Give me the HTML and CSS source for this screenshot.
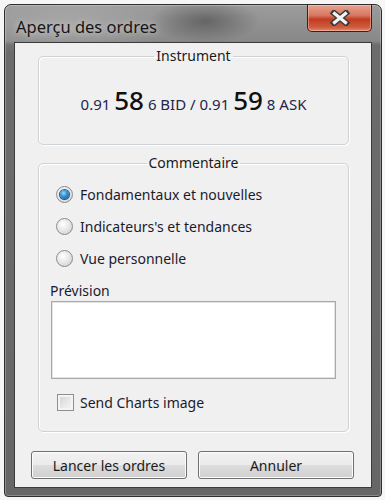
FILE: index.html
```html
<!DOCTYPE html>
<html lang="fr">
<head>
    <meta charset="UTF-8" />
    <title>Aperçu des ordres</title>
    <link rel="stylesheet" href="styles.css">
</head>
<body>
    <div class="window">
        <div class="titlebar">
            <span class="title">Aperçu des ordres</span>
            <button class="close-btn" aria-label="Fermer">
                <svg width="22" height="16" viewBox="0 0 22 16">
                    <path d="M5 3 L17 13 M17 3 L5 13" stroke="#3a3a3a" stroke-width="6" stroke-linecap="square"/>
                    <path d="M5.5 3.5 L16.5 12.5 M16.5 3.5 L5.5 12.5" stroke="#f4f4f4" stroke-width="3.2" stroke-linecap="square"/>
                </svg>
            </button>
        </div>

        <div class="client">
            <fieldset class="group group-instrument">
                <legend>Instrument</legend>
                <div class="prices">
                    <span>0.91</span> <b>58</b> <span>6 BID / 0.91</span> <b>59</b> <span>8 ASK</span>
                </div>
            </fieldset>

            <fieldset class="group group-comment">
                <legend>Commentaire</legend>

                <label class="radio-row">
                    <span class="radio checked"></span>
                    Fondamentaux et nouvelles
                </label>
                <label class="radio-row">
                    <span class="radio"></span>
                    Indicateurs's et tendances
                </label>
                <label class="radio-row">
                    <span class="radio"></span>
                    Vue personnelle
                </label>

                <div class="field-label">Prévision</div>
                <div class="textbox"></div>

                <label class="check-row">
                    <span class="checkbox"></span>
                    Send Charts image
                </label>
            </fieldset>

            <div class="actions">
                <button class="win-btn">Lancer les ordres</button>
                <button class="win-btn">Annuler</button>
            </div>
        </div>
    </div>
</body>
</html>
```

FILE: styles.css
```css
:root {
    --client-bg: #f0f0f0;
    --group-border: #cdd3d6;
    --text: #1b1b2e;
}

* {
    box-sizing: border-box;
}

body {
    margin: 0;
    width: 385px;
    height: 500px;
    overflow: hidden;
    font-family: "Noto Sans", "Open Sans", sans-serif;
    background: #f6f6f6;
}

.window {
    margin: 4px 3px 3px 4px;
    height: 493px;
    border: 1px solid #2e2e2e;
    border-radius: 7px 7px 4px 4px;
    padding: 0 9px 8px 9px;
    background:
        radial-gradient(ellipse 55px 22px at 200px 16px, rgba(55, 55, 55, 0.5), transparent),
        radial-gradient(ellipse 110px 30px at 60px 22px, rgba(215, 215, 215, 0.35), transparent),
        linear-gradient(180deg, #9c9c9c 0, #888 36px, #6c6c6c 40px, #666 100%);
    box-shadow: inset 0 0 0 1px rgba(255, 255, 255, 0.25);
}

.titlebar {
    height: 37px;
    display: flex;
    justify-content: space-between;
    align-items: flex-start;
}

.title {
    margin-top: 10px;
    margin-left: 2px;
    font-size: 16.5px;
    color: #151515;
    text-shadow: 0 0 6px rgba(255, 255, 255, 0.6);
}

.close-btn {
    width: 65px;
    height: 27px;
    border: 1px solid #4a1a12;
    border-top: none;
    border-radius: 0 0 5px 5px;
    background: linear-gradient(180deg, #e6a391 0%, #d7775f 40%, #c13c22 55%, #cf5a3d 85%, #e08a6f 100%);
    box-shadow: inset 0 0 0 1px rgba(255, 210, 200, 0.45);
    display: flex;
    align-items: center;
    justify-content: center;
    padding: 0;
}

.client {
    height: 446px;
    background: var(--client-bg);
    border: 1px solid #3b3b3b;
    padding: 4px 16px 0 16px;
    color: var(--text);
    font-size: 14px;
}

.group {
    margin: 0 6px 0 7px;
    border: 1px solid var(--group-border);
    border-radius: 5px;
    box-shadow: inset 1px 1px 0 #fff, 1px 1px 0 #fff;
    padding: 0 12px;
}

.group legend {
    margin: 0 auto;
    padding: 0 2px;
    line-height: 18px;
    color: #1a1a1a;
}

.group-instrument {
    padding-top: 18px;
    padding-bottom: 23px;
}

.prices {
    text-align: center;
    font-size: 15px;
    line-height: 34px;
    color: #25254a;
}

.prices b {
    font-size: 26px;
    font-weight: 500;
    color: #101010;
}

.group-comment {
    margin-top: 9px;
    padding-top: 6px;
    padding-bottom: 20px;
}

.radio-row {
    display: flex;
    align-items: center;
    gap: 7px;
    height: 32px;
    margin-left: 5px;
}

.radio {
    width: 17px;
    height: 17px;
    border-radius: 50%;
    border: 1px solid #8c8c8c;
    background: radial-gradient(circle at 40% 35%, #ffffff 0, #e9e9e9 45%, #c9c9c9 100%);
    position: relative;
}

.radio.checked::after {
    content: "";
    position: absolute;
    inset: 3px;
    border-radius: 50%;
    background: radial-gradient(circle at 40% 35%, #9fd6f5 0, #2a8fd0 45%, #0d4f86 100%);
    box-shadow: 0 0 0 1px #1c5a8a;
}

.field-label {
    margin-top: 8px;
    margin-left: -1px;
    line-height: 18px;
}

.textbox {
    height: 78px;
    margin-top: 1px;
    background: #fff;
    border: 1px solid #a7a9ac;
    box-shadow: inset 0 0 0 1px #e3e3e3;
}

.check-row {
    display: flex;
    align-items: center;
    gap: 6px;
    margin-top: 14px;
    margin-left: 6px;
    height: 18px;
}

.checkbox {
    width: 17px;
    height: 17px;
    border: 1px solid #8e8f8f;
    background: linear-gradient(135deg, #d0d0d0 0%, #eaeaea 60%, #f6f6f6 100%);
    box-shadow: inset 0 0 0 2px #f4f4f4;
}

.actions {
    display: flex;
    gap: 11px;
    margin-top: 19px;
}

.win-btn {
    width: 156px;
    height: 28px;
    font-family: inherit;
    font-size: 14px;
    color: #1a1a1a;
    border: 1px solid #707070;
    border-radius: 3px;
    background: linear-gradient(180deg, #f2f2f2 0%, #ebebeb 50%, #dddddd 51%, #cfcfcf 100%);
    box-shadow: inset 0 0 0 1px #fcfcfc;
    padding: 0;
}
```
